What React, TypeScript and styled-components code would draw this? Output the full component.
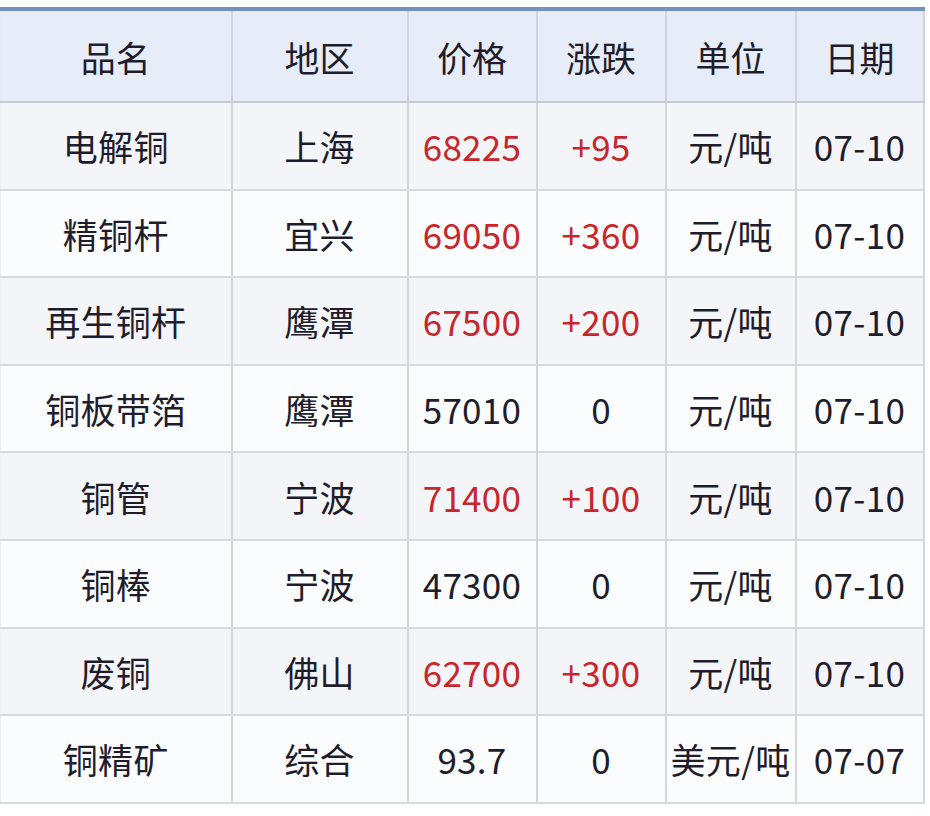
import React from "react";
import styled, { createGlobalStyle } from "styled-components";

const Global = createGlobalStyle`
  html, body { margin: 0; padding: 0; background: #ffffff; }
  body { font-family: "Noto Sans CJK SC", "Noto Sans", sans-serif; }
`;

const Page = styled.div`
  padding-top: 7px;
  width: 923px;
`;

const Table = styled.table`
  width: 923px;
  border-collapse: collapse;
  table-layout: fixed;
  border-top: 4px solid #7191c2;
  border-bottom: 2px solid #d3d6dc;
  border-right: 2px solid #d3d6dc;
  font-family: "Noto Sans CJK SC", "Noto Sans", sans-serif;
  font-size: 35px;
  color: #211c2c;
`;

const HeadCell = styled.th`
  height: 90px;
  padding: 0;
  font-weight: 400;
  background: #e7edf8;
  border-left: 2px solid #cfd4dd;
  border-bottom: 2px solid #c6cbd4;
  text-align: center;
  vertical-align: middle;
  &:first-child { border-left: 1px solid #e6eaf1; }
`;

const Row = styled.tr<{ $shade: boolean }>`
  background: ${(p) => (p.$shade ? "#f4f5f8" : "#fbfcfe")};
`;

const Cell = styled.td<{ $red?: boolean }>`
  height: 85.6px;
  padding: 0;
  text-align: center;
  vertical-align: middle;
  white-space: nowrap;
  letter-spacing: 0.3px;
  border-left: 2px solid #d3d6dc;
  border-bottom: 2px solid #d6d9df;
  color: ${(p) => (p.$red ? "#c8262c" : "#211c2c")};
  &:first-child { border-left: 1px solid #eceef2; }
`;

const widths = [231, 176, 129, 129, 130, 128];
const headers = ["品名", "地区", "价格", "涨跌", "单位", "日期"];

const rows: [string, string, string, string, string, string][] = [
  ["电解铜", "上海", "68225", "+95", "元/吨", "07-10"],
  ["精铜杆", "宜兴", "69050", "+360", "元/吨", "07-10"],
  ["再生铜杆", "鹰潭", "67500", "+200", "元/吨", "07-10"],
  ["铜板带箔", "鹰潭", "57010", "0", "元/吨", "07-10"],
  ["铜管", "宁波", "71400", "+100", "元/吨", "07-10"],
  ["铜棒", "宁波", "47300", "0", "元/吨", "07-10"],
  ["废铜", "佛山", "62700", "+300", "元/吨", "07-10"],
  ["铜精矿", "综合", "93.7", "0", "美元/吨", "07-07"],
];

export default function App() {
  return (
    <Page>
      <Global />
      <Table>
        <colgroup>
          {widths.map((w, i) => (
            <col key={i} style={{ width: w }} />
          ))}
        </colgroup>
        <thead>
          <tr>
            {headers.map((h) => (
              <HeadCell key={h}>{h}</HeadCell>
            ))}
          </tr>
        </thead>
        <tbody>
          {rows.map((r, i) => {
            const up = r[3].startsWith("+");
            return (
              <Row key={i} $shade={i % 2 === 0}>
                <Cell>{r[0]}</Cell>
                <Cell>{r[1]}</Cell>
                <Cell $red={up}>{r[2]}</Cell>
                <Cell $red={up}>{r[3]}</Cell>
                <Cell>{r[4]}</Cell>
                <Cell>{r[5]}</Cell>
              </Row>
            );
          })}
        </tbody>
      </Table>
    </Page>
  );
}
